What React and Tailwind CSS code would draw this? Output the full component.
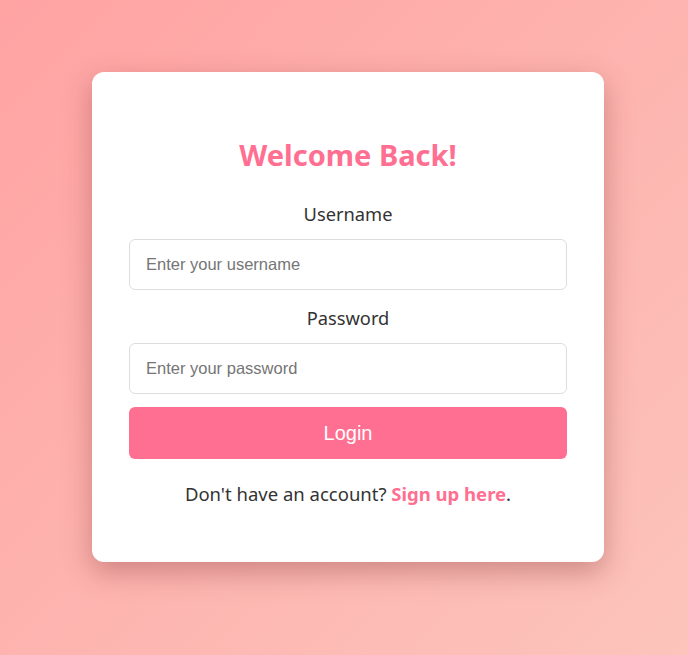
import React, { useState } from "react";

const Login = () => {
  const [username, setUsername] = useState("");
  const [password, setPassword] = useState("");

  return (
    <div className="min-h-screen bg-[linear-gradient(135deg,#ffa3a3_0%,#fcc4bb_100%)] flex justify-center items-start pl-2 pt-[72px] font-['Noto_Sans',sans-serif]">
      <div className="w-[512px] bg-white rounded-[12px] shadow-[0_10px_28px_rgba(120,40,40,0.35)] px-[37px] pt-[66px] pb-[55px] text-center">
        <h2 className="text-[29px] leading-[34px] font-bold text-[#ff6f91]">Welcome Back!</h2>

        {/* Username */}
        <label htmlFor="username" className="block mt-[29px] text-[18.3px] leading-[26px] text-[#333]">
          Username
        </label>
        <input
          id="username"
          type="text"
          placeholder="Enter your username"
          value={username}
          onChange={(e) => setUsername(e.target.value)}
          className="block w-full mt-[12px] h-[51px] px-4 border border-[#ddd] rounded-[6px] text-[16.5px] font-['Liberation_Sans',Arial,sans-serif] placeholder:text-[#757575] focus:outline-none"
        />

        {/* Password */}
        <label htmlFor="password" className="block mt-[15px] text-[18.3px] leading-[26px] text-[#333]">
          Password
        </label>
        <input
          id="password"
          type="password"
          placeholder="Enter your password"
          value={password}
          onChange={(e) => setPassword(e.target.value)}
          className="block w-full mt-[12px] h-[51px] px-4 border border-[#ddd] rounded-[6px] text-[16.5px] font-['Liberation_Sans',Arial,sans-serif] placeholder:text-[#757575] focus:outline-none"
        />

        <button className="block w-full mt-[13px] h-[52px] bg-[#ff6f91] text-white rounded-[6px] text-[20px] font-['Liberation_Sans',Arial,sans-serif]">
          Login
        </button>

        <p className="mt-[22px] text-[18.5px] leading-[26px] text-[#333]">
          Don't have an account? <a href="#" className="font-bold text-[#ff6f91]">Sign up here</a>.
        </p>
      </div>
    </div>
  );
};

export default Login;
